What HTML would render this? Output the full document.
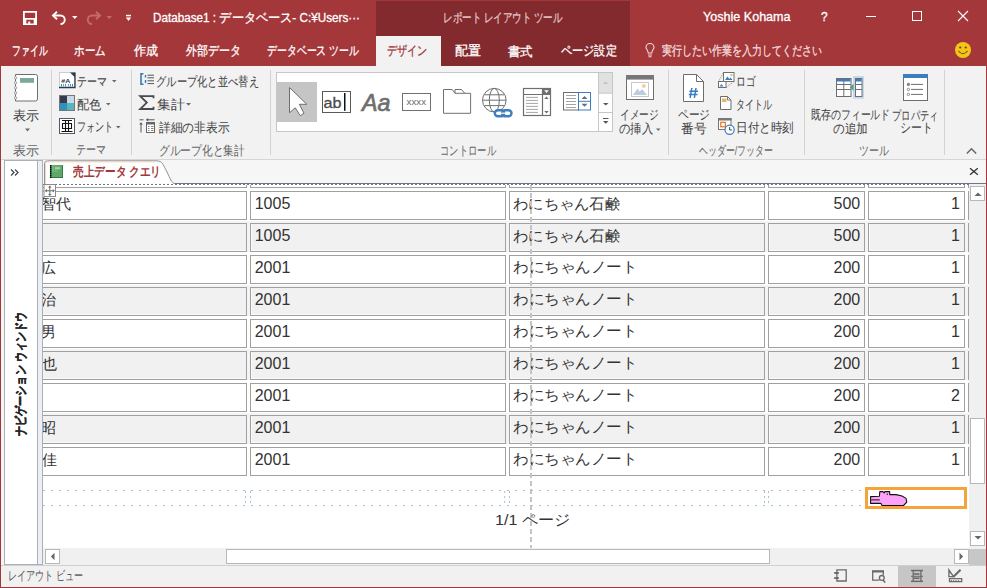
<!DOCTYPE html>
<html><head><meta charset="utf-8">
<style>
*{box-sizing:border-box}
html,body{margin:0;padding:0;width:987px;height:588px;overflow:hidden;background:#A4373A;font-family:"Liberation Sans",sans-serif}
.a{position:absolute;white-space:nowrap}
.r{position:absolute}
svg{position:absolute;overflow:visible}
.box{position:absolute;height:29px;border:1px solid #A0A0A0;background:#fff}
.g{background:#F1F1F1;box-shadow:inset 1px -1px 0 #FBFBFB}
.num{position:absolute;font-size:15px;line-height:15px;color:#3A3A3A;white-space:nowrap}
.jp{position:absolute;font-size:15px;line-height:15px;color:#3A3A3A;white-space:nowrap;transform-origin:0 0}
</style></head><body>
<!-- title bar -->
<div class="r" style="left:376px;top:1px;width:254px;height:65px;background:#832A2E"></div>
<div class="r" style="left:376px;top:36px;width:65px;height:30px;background:#F2F2F2"></div>
<!-- ribbon -->
<div class="r" style="left:1px;top:66px;width:985px;height:93px;background:#F2F2F2"></div>
<div class="r" style="left:1px;top:159px;width:985px;height:1px;background:#D6D6D6"></div>
<div class="r" style="left:51px;top:70px;width:1px;height:85px;background:#D2D2D2"></div>
<div class="r" style="left:131px;top:70px;width:1px;height:85px;background:#D2D2D2"></div>
<div class="r" style="left:270px;top:70px;width:1px;height:85px;background:#D2D2D2"></div>
<div class="r" style="left:668px;top:70px;width:1px;height:85px;background:#D2D2D2"></div>
<div class="r" style="left:804px;top:70px;width:1px;height:85px;background:#D2D2D2"></div>
<div class="r" style="left:944px;top:70px;width:1px;height:85px;background:#D2D2D2"></div>
<!-- main area -->
<div class="r" style="left:1px;top:160px;width:985px;height:405px;background:#F6F6F6"></div>
<!-- nav pane -->
<div class="r" style="left:4px;top:160px;width:39px;height:405px;background:#EDEFF2;border:1px solid #A9B0BA"></div>
<div class="r" style="left:5px;top:161px;width:33px;height:403px;background:#FFFFFF;border-right:1px solid #A9B0BA"></div>
<!-- doc tab bar -->
<div class="r" style="left:43px;top:160px;width:943px;height:24px;background:#F6F6F6"></div>
<div class="r" style="left:174px;top:183px;width:812px;height:1px;background:#6F7783"></div>
<!-- report area -->
<div class="r" style="left:43px;top:184px;width:926px;height:365px;background:#FFFFFF"></div>
<div class="r" style="left:43px;top:184px;width:926px;height:1px;background:repeating-linear-gradient(90deg,#6F7783 0 2px,transparent 2px 4px)"></div>
<!-- grid clip -->
<div class="r" style="left:0;top:0;width:987px;height:588px;clip-path:inset(185px 19px 40px 43px)">
  <div class="r" style="left:43px;top:221px;width:925px;height:31px;background:#F4F4F4"></div>
<div class="r" style="left:43px;top:285px;width:925px;height:31px;background:#F4F4F4"></div>
<div class="r" style="left:43px;top:349px;width:925px;height:31px;background:#F4F4F4"></div>
<div class="r" style="left:43px;top:413px;width:925px;height:31px;background:#F4F4F4"></div>
<div class="box" style="left:40px;top:159px;width:207px"></div>
  <div class="box" style="left:250px;top:159px;width:256px"></div>
  <div class="box" style="left:509px;top:159px;width:256px"></div>
  <div class="box" style="left:768px;top:159px;width:97px"></div>
  <div class="box" style="left:868px;top:159px;width:97px"></div>
  <div class="box" style="left:40px;top:191px;width:207px"></div>
<div class="box" style="left:250px;top:191px;width:256px"></div>
<div class="box" style="left:509px;top:191px;width:256px"></div>
<div class="box" style="left:768px;top:191px;width:97px"></div>
<div class="box" style="left:868px;top:191px;width:97px"></div>
<div class="box g" style="left:40px;top:223px;width:207px"></div>
<div class="box g" style="left:250px;top:223px;width:256px"></div>
<div class="box g" style="left:509px;top:223px;width:256px"></div>
<div class="box g" style="left:768px;top:223px;width:97px"></div>
<div class="box g" style="left:868px;top:223px;width:97px"></div>
<div class="box" style="left:40px;top:255px;width:207px"></div>
<div class="box" style="left:250px;top:255px;width:256px"></div>
<div class="box" style="left:509px;top:255px;width:256px"></div>
<div class="box" style="left:768px;top:255px;width:97px"></div>
<div class="box" style="left:868px;top:255px;width:97px"></div>
<div class="box g" style="left:40px;top:287px;width:207px"></div>
<div class="box g" style="left:250px;top:287px;width:256px"></div>
<div class="box g" style="left:509px;top:287px;width:256px"></div>
<div class="box g" style="left:768px;top:287px;width:97px"></div>
<div class="box g" style="left:868px;top:287px;width:97px"></div>
<div class="box" style="left:40px;top:319px;width:207px"></div>
<div class="box" style="left:250px;top:319px;width:256px"></div>
<div class="box" style="left:509px;top:319px;width:256px"></div>
<div class="box" style="left:768px;top:319px;width:97px"></div>
<div class="box" style="left:868px;top:319px;width:97px"></div>
<div class="box g" style="left:40px;top:351px;width:207px"></div>
<div class="box g" style="left:250px;top:351px;width:256px"></div>
<div class="box g" style="left:509px;top:351px;width:256px"></div>
<div class="box g" style="left:768px;top:351px;width:97px"></div>
<div class="box g" style="left:868px;top:351px;width:97px"></div>
<div class="box" style="left:40px;top:383px;width:207px"></div>
<div class="box" style="left:250px;top:383px;width:256px"></div>
<div class="box" style="left:509px;top:383px;width:256px"></div>
<div class="box" style="left:768px;top:383px;width:97px"></div>
<div class="box" style="left:868px;top:383px;width:97px"></div>
<div class="box g" style="left:40px;top:415px;width:207px"></div>
<div class="box g" style="left:250px;top:415px;width:256px"></div>
<div class="box g" style="left:509px;top:415px;width:256px"></div>
<div class="box g" style="left:768px;top:415px;width:97px"></div>
<div class="box g" style="left:868px;top:415px;width:97px"></div>
<div class="box" style="left:40px;top:447px;width:207px"></div>
<div class="box" style="left:250px;top:447px;width:256px"></div>
<div class="box" style="left:509px;top:447px;width:256px"></div>
<div class="box" style="left:768px;top:447px;width:97px"></div>
<div class="box" style="left:868px;top:447px;width:97px"></div>
  <div class="a" style="left:41.00px;top:195.75px;font-size:15px;line-height:1;color:#333333;font-weight:400;">智代</div>
<div class="a" style="left:254.70px;top:196.10px;font-size:16px;line-height:1;color:#333333;font-weight:400;">1005</div>
<div class="a" style="left:513.18px;top:195.70px;font-size:15px;line-height:1;color:#333333;font-weight:400;transform:scaleX(1.0194);transform-origin:0 0;">わにちゃん石鹸</div>
<div class="a" style="left:833.50px;top:196.10px;font-size:16px;line-height:1;color:#333333;font-weight:400;">500</div>
<div class="a" style="left:951.00px;top:196.10px;font-size:16px;line-height:1;color:#333333;font-weight:400;">1</div>
<div class="a" style="left:254.70px;top:228.10px;font-size:16px;line-height:1;color:#333333;font-weight:400;">1005</div>
<div class="a" style="left:513.18px;top:227.70px;font-size:15px;line-height:1;color:#333333;font-weight:400;transform:scaleX(1.0194);transform-origin:0 0;">わにちゃん石鹸</div>
<div class="a" style="left:833.50px;top:228.10px;font-size:16px;line-height:1;color:#333333;font-weight:400;">500</div>
<div class="a" style="left:951.00px;top:228.10px;font-size:16px;line-height:1;color:#333333;font-weight:400;">1</div>
<div class="a" style="left:41.00px;top:260.25px;font-size:15px;line-height:1;color:#333333;font-weight:400;">広</div>
<div class="a" style="left:254.70px;top:260.10px;font-size:16px;line-height:1;color:#333333;font-weight:400;">2001</div>
<div class="a" style="left:513.16px;top:259.20px;font-size:15px;line-height:1;color:#333333;font-weight:400;transform:scaleX(1.0365);transform-origin:0 0;">わにちゃんノート</div>
<div class="a" style="left:833.50px;top:260.10px;font-size:16px;line-height:1;color:#333333;font-weight:400;">200</div>
<div class="a" style="left:951.00px;top:260.10px;font-size:16px;line-height:1;color:#333333;font-weight:400;">1</div>
<div class="a" style="left:41.00px;top:291.75px;font-size:15px;line-height:1;color:#333333;font-weight:400;">治</div>
<div class="a" style="left:254.70px;top:292.10px;font-size:16px;line-height:1;color:#333333;font-weight:400;">2001</div>
<div class="a" style="left:513.16px;top:291.20px;font-size:15px;line-height:1;color:#333333;font-weight:400;transform:scaleX(1.0365);transform-origin:0 0;">わにちゃんノート</div>
<div class="a" style="left:833.50px;top:292.10px;font-size:16px;line-height:1;color:#333333;font-weight:400;">200</div>
<div class="a" style="left:951.00px;top:292.10px;font-size:16px;line-height:1;color:#333333;font-weight:400;">1</div>
<div class="a" style="left:41.00px;top:323.75px;font-size:15px;line-height:1;color:#333333;font-weight:400;">男</div>
<div class="a" style="left:254.70px;top:324.10px;font-size:16px;line-height:1;color:#333333;font-weight:400;">2001</div>
<div class="a" style="left:513.16px;top:323.20px;font-size:15px;line-height:1;color:#333333;font-weight:400;transform:scaleX(1.0365);transform-origin:0 0;">わにちゃんノート</div>
<div class="a" style="left:833.50px;top:324.10px;font-size:16px;line-height:1;color:#333333;font-weight:400;">200</div>
<div class="a" style="left:951.00px;top:324.10px;font-size:16px;line-height:1;color:#333333;font-weight:400;">1</div>
<div class="a" style="left:42.00px;top:355.75px;font-size:15px;line-height:1;color:#333333;font-weight:400;">也</div>
<div class="a" style="left:254.70px;top:356.10px;font-size:16px;line-height:1;color:#333333;font-weight:400;">2001</div>
<div class="a" style="left:513.16px;top:355.20px;font-size:15px;line-height:1;color:#333333;font-weight:400;transform:scaleX(1.0365);transform-origin:0 0;">わにちゃんノート</div>
<div class="a" style="left:833.50px;top:356.10px;font-size:16px;line-height:1;color:#333333;font-weight:400;">200</div>
<div class="a" style="left:951.00px;top:356.10px;font-size:16px;line-height:1;color:#333333;font-weight:400;">1</div>
<div class="a" style="left:254.70px;top:388.10px;font-size:16px;line-height:1;color:#333333;font-weight:400;">2001</div>
<div class="a" style="left:513.16px;top:387.20px;font-size:15px;line-height:1;color:#333333;font-weight:400;transform:scaleX(1.0365);transform-origin:0 0;">わにちゃんノート</div>
<div class="a" style="left:833.50px;top:388.10px;font-size:16px;line-height:1;color:#333333;font-weight:400;">200</div>
<div class="a" style="left:951.00px;top:388.10px;font-size:16px;line-height:1;color:#333333;font-weight:400;">2</div>
<div class="a" style="left:41.00px;top:419.75px;font-size:15px;line-height:1;color:#333333;font-weight:400;">昭</div>
<div class="a" style="left:254.70px;top:420.10px;font-size:16px;line-height:1;color:#333333;font-weight:400;">2001</div>
<div class="a" style="left:513.16px;top:419.20px;font-size:15px;line-height:1;color:#333333;font-weight:400;transform:scaleX(1.0365);transform-origin:0 0;">わにちゃんノート</div>
<div class="a" style="left:833.50px;top:420.10px;font-size:16px;line-height:1;color:#333333;font-weight:400;">200</div>
<div class="a" style="left:951.00px;top:420.10px;font-size:16px;line-height:1;color:#333333;font-weight:400;">1</div>
<div class="a" style="left:42.00px;top:451.75px;font-size:15px;line-height:1;color:#333333;font-weight:400;">佳</div>
<div class="a" style="left:254.70px;top:452.10px;font-size:16px;line-height:1;color:#333333;font-weight:400;">2001</div>
<div class="a" style="left:513.16px;top:451.20px;font-size:15px;line-height:1;color:#333333;font-weight:400;transform:scaleX(1.0365);transform-origin:0 0;">わにちゃんノート</div>
<div class="a" style="left:833.50px;top:452.10px;font-size:16px;line-height:1;color:#333333;font-weight:400;">200</div>
<div class="a" style="left:951.00px;top:452.10px;font-size:16px;line-height:1;color:#333333;font-weight:400;">1</div>
</div>
<!-- vertical report edge line -->
<div class="r" style="left:968px;top:185px;width:1px;height:3px;background:#A0A0A0"></div>
<div class="r" style="left:968px;top:191px;width:1px;height:29px;background:#A0A0A0"></div>
<div class="r" style="left:968px;top:223px;width:1px;height:29px;background:#A0A0A0"></div>
<div class="r" style="left:968px;top:255px;width:1px;height:29px;background:#A0A0A0"></div>
<div class="r" style="left:968px;top:287px;width:1px;height:29px;background:#A0A0A0"></div>
<div class="r" style="left:968px;top:319px;width:1px;height:29px;background:#A0A0A0"></div>
<div class="r" style="left:968px;top:351px;width:1px;height:29px;background:#A0A0A0"></div>
<div class="r" style="left:968px;top:383px;width:1px;height:29px;background:#A0A0A0"></div>
<div class="r" style="left:968px;top:415px;width:1px;height:29px;background:#A0A0A0"></div>
<div class="r" style="left:968px;top:447px;width:1px;height:29px;background:#A0A0A0"></div>
<!-- dashed center line -->
<div class="r" style="left:530px;top:185px;width:2px;height:363px;background:repeating-linear-gradient(180deg,#C4C4C4 0 5px,transparent 5px 8px)"></div>
<!-- footer dotted lines -->
<div class="r" style="left:43px;top:490px;width:925px;height:1px;background:repeating-linear-gradient(90deg,#A8C0D4 0 2px,transparent 2px 8px)"></div>
<div class="r" style="left:43px;top:505px;width:925px;height:1px;background:repeating-linear-gradient(90deg,#A8C0D4 0 2px,transparent 2px 8px)"></div>
<!-- orange selected box -->
<div class="r" style="left:865px;top:487px;width:102px;height:22px;border:3px solid #F5A33B;background:#fff"></div>
<!-- vertical scrollbar -->
<div class="r" style="left:969px;top:184px;width:17px;height:365px;background:#F0F0F0"></div>
<div class="r" style="left:970px;top:186px;width:15px;height:15px;background:#fff;border:1px solid #B8B8B8"></div>
<div class="r" style="left:970px;top:418px;width:15px;height:66px;background:#fff;border:1px solid #B8B8B8"></div>
<div class="r" style="left:970px;top:531px;width:15px;height:15px;background:#fff;border:1px solid #B8B8B8"></div>
<!-- horizontal scrollbar -->
<div class="r" style="left:43px;top:548px;width:926px;height:17px;background:#F0F0F0"></div>
<div class="r" style="left:45px;top:549px;width:15px;height:15px;background:#fff;border:1px solid #B8B8B8"></div>
<div class="r" style="left:226px;top:549px;width:544px;height:15px;background:#fff;border:1px solid #B8B8B8"></div>
<div class="r" style="left:954px;top:549px;width:15px;height:15px;background:#fff;border:1px solid #B8B8B8"></div>
<div class="r" style="left:969px;top:549px;width:17px;height:16px;background:#C6C7C9"></div>
<!-- status bar -->
<div class="r" style="left:1px;top:565px;width:985px;height:22px;background:#F1F1F1;border-top:1px solid #D0D0D0"></div>
<div class="r" style="left:898px;top:566px;width:38px;height:21px;background:#C6C6C6"></div>
<!--ICONS-->
<!-- save -->
<svg style="left:0;top:0" width="987" height="66">
<g fill="#FFFFFF">
<path d="M23 11h14v14h-14z M24.8 12.8v5.3h10.4v-5.3z M26.3 19.8v3.7h1.9v-2h2v2h3.5v-3.7z" fill-rule="evenodd"/>
</g>
<!-- undo -->
<path d="M54 15.5 H60.5 A4.2 4.2 0 0 1 60.5 24" fill="none" stroke="#FFFFFF" stroke-width="1.9"/>
<path d="M57 11.8 L53 15.5 L57 19.2" fill="none" stroke="#FFFFFF" stroke-width="1.9"/>
<path d="M72 16h5.5l-2.75 3z" fill="#FFFFFF"/>
<!-- redo -->
<path d="M99 15.5 H92 A4.2 4.2 0 0 0 92 24" fill="none" stroke="#C46B6E" stroke-width="1.9"/>
<path d="M96 11.8 L100 15.5 L96 19.2" fill="none" stroke="#C46B6E" stroke-width="1.9"/>
<path d="M106.5 16h5.5l-2.75 3z" fill="#C46B6E"/>
<!-- customize -->
<rect x="126" y="14.8" width="5" height="1.5" fill="#FFFFFF"/>
<path d="M125.8 17.5h5.4l-2.7 3.6z" fill="#FFFFFF"/>
<!-- minimize -->
<rect x="866" y="16" width="10" height="1" fill="#FFFFFF"/>
<!-- maximize -->
<rect x="912.5" y="11.5" width="9" height="9" fill="none" stroke="#FFFFFF" stroke-width="1"/>
<!-- close -->
<path d="M958 11 L968 21 M968 11 L958 21" stroke="#FFFFFF" stroke-width="1.1" fill="none"/>
<!-- lightbulb -->
<path d="M648.2 53 C648.2 50.5 646 49 646 47.5 A4 4 0 0 1 654 47.5 C654 49 651.8 50.5 651.8 53 Z" fill="none" stroke="#F2DCDC" stroke-width="1.1"/>
<path d="M648 55 h4 M648.5 56.8 h3" stroke="#F2DCDC" stroke-width="1.1"/>
<!-- smiley -->
<circle cx="963" cy="50" r="8" fill="#F6C413"/>
<circle cx="960.2" cy="47.5" r="1.1" fill="#4A4A3A"/>
<circle cx="965.8" cy="47.5" r="1.1" fill="#4A4A3A"/>
<path d="M958.5 51 Q963 56.5 967.5 51" fill="none" stroke="#4A4A3A" stroke-width="1.1"/>
</svg>

<svg style="left:0;top:0" width="987" height="160">
<!-- 表示 notebook -->
<path d="M15.5 74.5 H35.5 Q37.5 74.5 37.5 76.5 V99 Q37.5 101 35.5 101 H15.5 Z" fill="#FFFFFF" stroke="#6E6E6E" stroke-width="1"/>
<rect x="20" y="78" width="14" height="4.8" fill="#7BAA98"/>
<g fill="#FFFFFF" stroke="#8A8A8A" stroke-width="0.8">
<circle cx="15.6" cy="77.8" r="1.2"/><circle cx="15.6" cy="82.8" r="1.2"/><circle cx="15.6" cy="87.8" r="1.2"/><circle cx="15.6" cy="92.9" r="1.2"/><circle cx="15.6" cy="97.9" r="1.2"/>
</g>
<path d="M25 128.5 h5 l-2.5 3z" fill="#6A6A6A"/>
<!-- theme icon -->
<rect x="59.5" y="72.5" width="15" height="15" fill="#FFFFFF" stroke="#C8CDD4" stroke-width="1"/>
<path d="M59 87.5 H75 V72.5" fill="none" stroke="#2F3B4C" stroke-width="1.3"/>
<path d="M70 72.5 H75 V77.5 Z" fill="#2F3B4C"/>
<text x="61.3" y="82.6" font-family="'Liberation Sans',sans-serif" font-size="6" font-weight="700" fill="#2F3B4C" textLength="9" lengthAdjust="spacingAndGlyphs">#A</text>
<rect x="61" y="84" width="1" height="2.5" fill="#2E92BA"/><rect x="63" y="84" width="1" height="2.5" fill="#57B5BE"/><rect x="65" y="84" width="1" height="2.5" fill="#2E92BA"/><rect x="68" y="84" width="1" height="2.5" fill="#57B5BE"/><rect x="70" y="84" width="1" height="2.5" fill="#2E92BA"/><rect x="72" y="84" width="1" height="2.5" fill="#2E92BA"/>
<path d="M112 80 h4.5 l-2.25 2.5z" fill="#6A6A6A"/>
<!-- colors icon -->
<rect x="59" y="95" width="16" height="16" fill="#777"/>
<rect x="60" y="96" width="7" height="7" fill="#3A3A4E"/><rect x="67" y="96" width="7" height="7" fill="#C9D8E6"/>
<rect x="60" y="103" width="7" height="7" fill="#2E92BA"/><rect x="67" y="103" width="7" height="7" fill="#57B5BE"/>
<path d="M106 103 h4.5 l-2.25 2.5z" fill="#6A6A6A"/>
<!-- font icon -->
<rect x="59.5" y="118.5" width="15" height="15" fill="#FFFFFF" stroke="#505A6A" stroke-width="1"/>
<path d="M62 120.5 h10 M61.5 131.5 h11 M62.5 123.5 h9 v5 h-9 z M65.5 121 v10 M68.5 121 v10" fill="none" stroke="#111" stroke-width="1.1"/>
<path d="M116 126 h4.5 l-2.25 2.5z" fill="#6A6A6A"/>
<!-- group & sort -->
<path d="M143.5 73.8 H141 V84.2 H143.5" fill="none" stroke="#3A78BC" stroke-width="1.6"/>
<path d="M145.5 75 v2.5 M145.5 80 v3" stroke="#3A78BC" stroke-width="1.4"/>
<path d="M147.5 75.2 h6.5 M147.5 77.8 h6.5 M147.5 80.8 h6.5 M147.5 83.6 h6.5" stroke="#555" stroke-width="1"/>
<!-- sigma -->
<path d="M153.5 98.2 V96.2 H140.2 L146.8 102.6 L140.2 109 H153.5 V106.8" fill="none" stroke="#4A4A4A" stroke-width="1.8"/>
<path d="M186 103 h5 l-2.5 2.7z" fill="#6A6A6A"/>
<!-- details hide -->
<path d="M139.5 119.8 h4 M146.5 119.8 h8 M141 124 v8.5" stroke="#555" stroke-width="1"/>
<path d="M146 119.8 l2.2 -1.8 v3.6z M141 122.2 l-1.8 2.2 h3.6z" fill="#555"/>
<rect x="146.5" y="122.5" width="8" height="10" fill="#FFFFFF" stroke="#666" stroke-width="1"/>
<rect x="146" y="122" width="9" height="2.5" fill="#666"/>
<path d="M148 126.5 h1.5 M151 126.5 h2.5 M148 128.5 h1.5 M151 128.5 h2.5 M148 130.5 h1.5 M151 130.5 h2.5" stroke="#777" stroke-width="0.9"/>
<!-- gallery -->
<rect x="276.5" y="72.5" width="336" height="59" fill="#FFFFFF" stroke="#C6C6C6" stroke-width="1"/>
<rect x="277" y="82" width="40" height="40" fill="#C5C5C5"/>
<path d="M289.5 87.5 L306.8 104.3 L299.3 104.3 L304 113.2 L300.3 115.7 L295.2 107.8 L289.5 112.8 Z" fill="#FFFFFF" stroke="#6E6E6E" stroke-width="1" stroke-linejoin="round"/>
<rect x="322.5" y="91.5" width="28" height="21" fill="#FFFFFF" stroke="#5A5A5A" stroke-width="1"/>
<text x="323.6" y="108.2" font-family="'Liberation Sans',sans-serif" font-size="15.5" font-weight="400" fill="#4A4A4A" stroke="#4A4A4A" stroke-width="0.3" textLength="18"  lengthAdjust="spacingAndGlyphs">ab</text>
<rect x="344" y="93" width="1.5" height="17.8" fill="#111"/>
<text x="362" y="110.7" font-family="'Liberation Sans',sans-serif" font-size="24" font-style="italic" font-weight="400" fill="#6E6E6E" stroke="#6E6E6E" stroke-width="0.7" textLength="28.5" lengthAdjust="spacingAndGlyphs">Aa</text>
<rect x="402.5" y="93.5" width="28" height="17" fill="#FFFFFF" stroke="#707070" stroke-width="1"/>
<text x="406.5" y="105" font-family="'Liberation Sans',sans-serif" font-size="9" fill="#6A6A6A" textLength="19.5" lengthAdjust="spacingAndGlyphs">xxxx</text>
<!-- folder -->
<path d="M443.5 113.3 V89.5 H452.2 L455 93.3 H470.6 V113.3 Z" fill="#FFFFFF" stroke="#707070" stroke-width="1"/>
<path d="M455 93.3 V89.5 H461.5 L464.7 93.3" fill="none" stroke="#707070" stroke-width="1"/>
<!-- globe -->
<g fill="none" stroke="#707070" stroke-width="1">
<circle cx="494.3" cy="100.2" r="11.8"/>
<ellipse cx="494.3" cy="100.2" rx="5" ry="11.8"/>
<path d="M482.5 100.2 h23.6 M484.3 94.8 h20 M484.3 105.6 h20"/>
</g>
<path d="M494 109.5 h19 v8.5 h-19z" fill="#FFFFFF" opacity="0.9"/>
<g fill="none" stroke="#3F7DBF" stroke-width="2.4">
<rect x="494.8" y="110.2" width="9.5" height="6" rx="3"/>
<rect x="502" y="110.2" width="9.5" height="6" rx="3"/>
</g>
<path d="M500 113.2 h6" stroke="#FFFFFF" stroke-width="1.2"/>
<!-- combo list -->
<rect x="523.5" y="88.5" width="27" height="27" fill="#FFFFFF" stroke="#6E6E6E" stroke-width="1.2"/>
<path d="M523.5 94.5 H550.5 M542.5 88.5 V115.5" stroke="#6E6E6E" stroke-width="1.2"/>
<rect x="542.5" y="88.5" width="8" height="6" fill="#6E6E6E"/>
<path d="M544.2 90.2 h4.6 l-2.3 2.8z" fill="#FFFFFF"/>
<path d="M544.3 99 h4.4 l-2.2 -2.4z M544.3 111 h4.4 l-2.2 2.4z" fill="#6E6E6E"/>
<path d="M526 97.4 h12 M526 100.4 h12 M526 103.4 h12 M526 106.4 h12 M526 109.4 h12 M526 112.4 h12" stroke="#9A9A9A" stroke-width="0.9"/>
<!-- spin list -->
<rect x="563.5" y="92.5" width="15" height="17.5" fill="#FFFFFF" stroke="#6E6E6E" stroke-width="1"/>
<path d="M566 95.5 h10 M566 98.5 h10 M566 101.5 h10 M566 104.5 h10 M566 107.5 h10" stroke="#9A9A9A" stroke-width="0.9"/>
<rect x="578.5" y="92.5" width="12" height="17.5" fill="#FFFFFF" stroke="#3C7CC0" stroke-width="1"/>
<path d="M578.5 101.3 h12" stroke="#3C7CC0" stroke-width="1"/>
<path d="M581.5 99 h6 l-3 -3z M581.5 103.8 h6 l-3 3z" fill="#6E6E6E"/>
<!-- gallery scroll buttons -->
<rect x="598.5" y="72.5" width="14" height="59" fill="#FFFFFF" stroke="#C6C6C6" stroke-width="1"/>
<rect x="599" y="73" width="13" height="20" fill="#E1E1E1"/>
<path d="M598.5 93.2 h14 M598.5 112.5 h14" stroke="#C6C6C6" stroke-width="1"/>
<path d="M603 84 h5 l-2.5 -2.5z" fill="#C0C0C0"/>
<path d="M603 103 h5.5 l-2.75 2.6z" fill="#555"/>
<path d="M603 118.5 h5.5" stroke="#555" stroke-width="1"/>
<path d="M603 121 h5.5 l-2.75 2.8z" fill="#555"/>
<!-- image insert -->
<rect x="626.5" y="75.5" width="27" height="24" fill="#FFFFFF" stroke="#6E6E6E" stroke-width="1"/>
<rect x="626" y="75" width="28" height="4.6" fill="#777"/>
<rect x="631.5" y="82.5" width="17" height="14" fill="#FFFFFF" stroke="#C8C8C8" stroke-width="1"/>
<path d="M633 95 L637.5 88.5 L642 95 Z" fill="#B8CEE0"/>
<path d="M639.5 92 L642 89 L647 95 H642 Z" fill="#B8CEE0"/>
<circle cx="643.9" cy="86" r="2" fill="#F2D29B"/>
<path d="M656 128.5 h4.5 l-2.25 2.5z" fill="#6A6A6A"/>
<!-- page number -->
<path d="M683.5 74.5 H696.5 L703.5 81.5 V101.5 H683.5 Z" fill="#FFFFFF" stroke="#6E6E6E" stroke-width="1"/>
<path d="M696.5 74.5 V81.5 H703.5" fill="none" stroke="#6E6E6E" stroke-width="1"/>
<path d="M691.8 88 L690.2 97.8 M696 88 L694.4 97.8 M689.3 91.3 H698 M688.8 94.6 H697.5" stroke="#3C7CC0" stroke-width="1.5" fill="none"/>
<!-- logo -->
<rect x="723.5" y="72.5" width="10.5" height="9" fill="#FFFFFF" stroke="#707070" stroke-width="1"/>
<path d="M725 80 L727.5 76.5 L730 80 Z M728.5 80 L730.5 77.5 L732.5 80z" fill="#3C7CC0"/>
<rect x="730.5" y="74" width="2" height="2" fill="#F0B860"/>
<rect x="718.5" y="81.5" width="7.5" height="6" fill="#FFFFFF" stroke="#707070" stroke-width="1"/>
<path d="M719.5 86.5 L721.5 84 L723.5 86.5z" fill="#3C7CC0"/>
<path d="M718.5 81.5 L723.5 72.5 M726 87.5 L734 81.5" stroke="#707070" stroke-width="0.9" stroke-dasharray="1 1.2"/>
<!-- title -->
<path d="M720.5 96.5 H727.5 L731 100 V109.5 H720.5 Z" fill="#FFFFFF" stroke="#6E6E6E" stroke-width="1"/>
<path d="M727.5 96.5 V100 H731" fill="none" stroke="#6E6E6E" stroke-width="0.9"/>
<rect x="722" y="98.5" width="4.5" height="3.5" fill="#E8B86A"/>
<!-- date time -->
<rect x="718.5" y="118.5" width="12.5" height="11" fill="#FFFFFF" stroke="#777" stroke-width="1"/>
<rect x="718" y="118" width="13.5" height="2.5" fill="#777"/>
<rect x="720.8" y="122.3" width="4.5" height="4.5" fill="#FFFFFF" stroke="#E8711E" stroke-width="1.2"/>
<circle cx="729.6" cy="129.8" r="4.6" fill="#FFFFFF" stroke="#3C7CC0" stroke-width="1.2"/>
<path d="M729.6 127 v3 h2.3" fill="none" stroke="#333" stroke-width="0.9"/>
<!-- add existing fields -->
<rect x="853" y="76" width="11" height="22.7" fill="#C5D9EE"/>
<rect x="836.5" y="78.5" width="14.5" height="18" fill="#FFFFFF" stroke="#6E6E6E" stroke-width="1"/>
<rect x="837" y="79" width="13.5" height="2.5" fill="#3C7CC0"/>
<path d="M843.8 78.5 v18 M836.5 84.5 h14.5 M836.5 89.5 h14.5" stroke="#6E6E6E" stroke-width="1"/>
<rect x="855.5" y="78.5" width="6.5" height="18" fill="#FFFFFF" stroke="#6E6E6E" stroke-width="1"/>
<rect x="856" y="79" width="5.5" height="2.5" fill="#3C7CC0"/>
<path d="M855.5 84.5 h6.5 M855.5 89.5 h6.5" stroke="#6E6E6E" stroke-width="1"/>
<path d="M853.6 83.8 V90.7 L849.7 87.2 Z" fill="#5A9E82"/>
<!-- property sheet -->
<rect x="903.5" y="74.5" width="24" height="26" fill="#FFFFFF" stroke="#6E6E6E" stroke-width="1"/>
<rect x="903" y="74" width="25" height="4" fill="#3C7CC0"/>
<circle cx="908.4" cy="84.4" r="1.2" fill="#777" stroke="#777" stroke-width="0.8"/>
<circle cx="908.4" cy="89.4" r="1.2" fill="#FFF" stroke="#777" stroke-width="0.8"/>
<circle cx="908.4" cy="94.4" r="1.2" fill="#FFF" stroke="#777" stroke-width="0.8"/>
<path d="M911 84.4 h12 M911 89.4 h12 M911 94.4 h12" stroke="#6E6E6E" stroke-width="1"/>
<!-- collapse caret -->
<path d="M966.8 153.5 L971.5 148.8 L976.2 153.5" fill="none" stroke="#666" stroke-width="1.5"/>
</svg>

<svg style="left:0;top:0" width="987" height="588">
<!-- doc tab -->
<path d="M44.5 184 V163.5 Q44.5 160.8 47.5 160.8 H156 C163 160.8 163 165 167 172 C170 178 171.5 183.5 175 183.5" fill="#FFFFFF" stroke="#8C929A" stroke-width="1"/>
<path d="M45.6 184 V163.8 Q45.6 161.9 47.8 161.9 H155" fill="none" stroke="#EFD2B0" stroke-width="0.9"/>
<!-- tab icon (green book) -->
<rect x="50" y="165" width="13" height="13" fill="#2F6B3A"/>
<rect x="51.5" y="165" width="10.8" height="12.2" fill="#5FA86A"/>
<rect x="52" y="165.5" width="6" height="6" fill="#78BC82" opacity="0.8"/>
<rect x="54.3" y="166.8" width="6.5" height="3" fill="#A3D4A9" stroke="#4E9A5B" stroke-width="0.6"/>
<path d="M50.6 165 v13" stroke="#000" stroke-width="1.3" stroke-dasharray="1.2 0.8"/>
<!-- doc close X -->
<path d="M970 168.3 L977.8 174.8 M977.8 168.3 L970 174.8" stroke="#333" stroke-width="1.3"/>
<!-- nav >> -->
<path d="M11 169.5 L14 172.5 L11 175.5 M15 169.5 L18 172.5 L15 175.5" fill="none" stroke="#444C58" stroke-width="1.3"/>
<!-- layout selector -->
<rect x="44" y="184.5" width="11.5" height="12" fill="#FFFFFF" stroke="#8A8A8A" stroke-width="1"/>
<path d="M49.8 186.5 v8.5 M45.5 190.8 h8.6" stroke="#6A6A6A" stroke-width="1"/>
<path d="M49.8 185.6 l-1.8 2 h3.6z M49.8 195.9 l-1.8 -2 h3.6z M44.8 190.8 l2 -1.8 v3.6z M54.8 190.8 l-2 -1.8 v3.6z" fill="#6A6A6A"/>
<!-- header row boxes bottom -->
<!-- footer small marks -->
<path d="M245.5 491 v14 M250.5 491 v14 M504.7 491 v14 M509.5 491 v14 M764.5 491 v14 M768.5 491 v14" stroke="#A8C0D4" stroke-width="1" stroke-dasharray="2 3"/>
<!-- crocodile -->
<path d="M870.6 496.6 L879.4 496.2 L879.8 491.6 L883 491.6 L884.2 493 L884.8 491.6 L889.6 491.6 L889.8 494.6 L896 494.6 L902 496 L906 498.4 L906.8 502.2 L903.5 505.5 L882 505.5 L881 503.4 L870.6 503.4 Z" fill="#FCA3F9" stroke="#111" stroke-width="1.1" stroke-linejoin="round"/>
<path d="M871.2 499.9 H879.8" stroke="#111" stroke-width="1"/>
<circle cx="887.3" cy="494.2" r="0.7" fill="#111"/>
<!-- v-scroll arrows -->
<path d="M974.5 196 h7 l-3.5 -3.6z" fill="#666"/>
<path d="M974.5 536 h7 l-3.5 3.6z" fill="#666"/>
<!-- h-scroll arrows -->
<path d="M54.5 552.8 v7.4 l-3.6 -3.7z" fill="#666"/>
<path d="M959.5 552.8 v7.4 l3.6 -3.7z" fill="#666"/>
<!-- status icons -->
<g fill="none" stroke="#6A6A6A" stroke-width="1.3">
<path d="M836.9 569.9 H846.2 V581 H836.9 Z"/>
<path d="M872.7 571 V580.2 H879.5 M883.3 571 V575"/>
<circle cx="881.8" cy="577.9" r="2.4"/>
<path d="M913.2 570.5 V581.2 M920.9 570.5 V581.2"/>
<path d="M948.9 576.6 V569.8 L953.5 576.6 Z M949.2 572.5 h1.6"/>
<path d="M949.5 578.6 h12.2 v3 h-12.2 z"/>
</g>
<g fill="#6A6A6A">
<rect x="834.2" y="572" width="4.6" height="1.9"/><rect x="834.2" y="577.1" width="4.6" height="1.9"/>
<rect x="872" y="570.2" width="12" height="2.3"/>
<path d="M883.5 579.6 L885.8 581.9 L884.7 583 L882.4 580.7 Z"/>
<rect x="911" y="569.8" width="12" height="1.5"/><rect x="911" y="580.6" width="12" height="1.5"/>
<rect x="914" y="573.2" width="5.5" height="1.6"/><rect x="914" y="577.4" width="5.5" height="1.6"/>
<rect x="911" y="575.8" width="12" height="1"/>
<path d="M953.2 575.5 L959.8 568.9 L961.3 570.4 L954.7 577 L952.8 577.4 Z"/>
<rect x="951" y="580" width="0.9" height="1"/><rect x="953.3" y="580" width="0.9" height="1"/><rect x="955.6" y="580" width="0.9" height="1"/><rect x="957.9" y="580" width="0.9" height="1"/>
</g>
</svg>
<!-- nav vertical text -->
<div class="a" style="left:21px;top:373.8px;font-size:12.5px;line-height:1;color:#262626;font-weight:700;-webkit-text-stroke:0.35px #262626;transform:translate(-50%,-50%) rotate(-90deg) scaleX(0.783)">ナビゲーション ウィンドウ</div>

<div class="a" style="left:152.56px;top:11.75px;font-size:12.5px;line-height:1;color:#FFFFFF;font-weight:400;transform:scaleX(0.9361);transform-origin:0 0;-webkit-text-stroke:0.30px #FFFFFF;">Database1 : データベース- C:¥Users···</div>
<div class="a" style="left:442.53px;top:11.75px;font-size:12.5px;line-height:1;color:#E2C3C4;font-weight:400;transform:scaleX(0.7329);transform-origin:0 0;-webkit-text-stroke:0.30px #E2C3C4;">レポート レイアウト ツール</div>
<div class="a" style="left:703.03px;top:9.75px;font-size:13px;line-height:1;color:#FFFFFF;font-weight:400;transform:scaleX(0.9667);transform-origin:0 0;-webkit-text-stroke:0.30px #FFFFFF;">Yoshie Kohama</div>
<div class="a" style="left:821.08px;top:10.00px;font-size:13px;line-height:1;color:#FFFFFF;font-weight:400;transform:scaleX(0.9167);transform-origin:0 0;-webkit-text-stroke:0.30px #FFFFFF;">?</div>
<div class="a" style="left:11.64px;top:44.75px;font-size:12.5px;line-height:1;color:#FFFFFF;font-weight:400;transform:scaleX(0.6800);transform-origin:0 0;-webkit-text-stroke:0.30px #FFFFFF;">ファイル</div>
<div class="a" style="left:74.19px;top:44.75px;font-size:12.5px;line-height:1;color:#FFFFFF;font-weight:400;transform:scaleX(0.8108);transform-origin:0 0;-webkit-text-stroke:0.30px #FFFFFF;">ホーム</div>
<div class="a" style="left:134.00px;top:45.00px;font-size:12.5px;line-height:1;color:#FFFFFF;font-weight:400;transform:scaleX(0.9231);transform-origin:0 0;-webkit-text-stroke:0.30px #FFFFFF;">作成</div>
<div class="a" style="left:186.15px;top:45.00px;font-size:12.5px;line-height:1;color:#FFFFFF;font-weight:400;transform:scaleX(0.8468);transform-origin:0 0;-webkit-text-stroke:0.30px #FFFFFF;">外部データ</div>
<div class="a" style="left:266.74px;top:44.50px;font-size:12.5px;line-height:1;color:#FFFFFF;font-weight:400;transform:scaleX(0.7605);transform-origin:0 0;-webkit-text-stroke:0.30px #FFFFFF;">データベース ツール</div>
<div class="a" style="left:387.22px;top:44.50px;font-size:12.5px;line-height:1;color:#A4373A;font-weight:400;transform:scaleX(0.7800);transform-origin:0 0;-webkit-text-stroke:0.30px #A4373A;">デザイン</div>
<div class="a" style="left:455.00px;top:45.25px;font-size:12.5px;line-height:1;color:#FFFFFF;font-weight:400;-webkit-text-stroke:0.30px #FFFFFF;">配置</div>
<div class="a" style="left:508.04px;top:45.75px;font-size:12.5px;line-height:1;color:#FFFFFF;font-weight:400;transform:scaleX(0.9600);transform-origin:0 0;-webkit-text-stroke:0.30px #FFFFFF;">書式</div>
<div class="a" style="left:560.64px;top:45.25px;font-size:12.5px;line-height:1;color:#FFFFFF;font-weight:400;transform:scaleX(0.8571);transform-origin:0 0;-webkit-text-stroke:0.30px #FFFFFF;">ページ設定</div>
<div class="a" style="left:662.00px;top:45.25px;font-size:12.5px;line-height:1;color:#F2DCDC;font-weight:400;transform:scaleX(0.7705);transform-origin:0 0;-webkit-text-stroke:0.30px #F2DCDC;">実行したい作業を入力してください</div>
<div class="a" style="left:13.00px;top:109.50px;font-size:12.5px;line-height:1;color:#444444;font-weight:400;-webkit-text-stroke:0.05px #444444;">表示</div>
<div class="a" style="left:13.00px;top:144.50px;font-size:12.5px;line-height:1;color:#666666;font-weight:400;-webkit-text-stroke:0.05px #666666;">表示</div>
<div class="a" style="left:77.23px;top:75.75px;font-size:12.5px;line-height:1;color:#444444;font-weight:400;transform:scaleX(0.7703);transform-origin:0 0;-webkit-text-stroke:0.05px #444444;">テーマ</div>
<div class="a" style="left:77.06px;top:98.50px;font-size:12.5px;line-height:1;color:#444444;font-weight:400;transform:scaleX(0.9400);transform-origin:0 0;-webkit-text-stroke:0.05px #444444;">配色</div>
<div class="a" style="left:76.60px;top:121.00px;font-size:12.5px;line-height:1;color:#444444;font-weight:400;transform:scaleX(0.7021);transform-origin:0 0;-webkit-text-stroke:0.05px #444444;">フォント</div>
<div class="a" style="left:76.23px;top:144.25px;font-size:12.5px;line-height:1;color:#666666;font-weight:400;transform:scaleX(0.7703);transform-origin:0 0;-webkit-text-stroke:0.05px #666666;">テーマ</div>
<div class="a" style="left:156.42px;top:76.00px;font-size:12.5px;line-height:1;color:#444444;font-weight:400;transform:scaleX(0.7913);transform-origin:0 0;-webkit-text-stroke:0.05px #444444;">グループ化と並べ替え</div>
<div class="a" style="left:157.43px;top:99.00px;font-size:12.5px;line-height:1;color:#444444;font-weight:400;transform:scaleX(1.0682);transform-origin:0 0;-webkit-text-stroke:0.05px #444444;">集計</div>
<div class="a" style="left:158.50px;top:121.75px;font-size:12.5px;line-height:1;color:#444444;font-weight:400;transform:scaleX(0.9026);transform-origin:0 0;-webkit-text-stroke:0.05px #444444;">詳細の非表示</div>
<div class="a" style="left:158.85px;top:144.75px;font-size:12.5px;line-height:1;color:#666666;font-weight:400;transform:scaleX(0.8232);transform-origin:0 0;-webkit-text-stroke:0.05px #666666;">グループ化と集計</div>
<div class="a" style="left:440.07px;top:144.75px;font-size:12.5px;line-height:1;color:#666666;font-weight:400;transform:scaleX(0.7171);transform-origin:0 0;-webkit-text-stroke:0.05px #666666;">コントロール</div>
<div class="a" style="left:620.26px;top:109.00px;font-size:12.5px;line-height:1;color:#444444;font-weight:400;transform:scaleX(0.7400);transform-origin:0 0;-webkit-text-stroke:0.05px #444444;">イメージ</div>
<div class="a" style="left:618.50px;top:123.00px;font-size:12.5px;line-height:1;color:#444444;font-weight:400;transform:scaleX(0.8684);transform-origin:0 0;-webkit-text-stroke:0.05px #444444;">の挿入</div>
<div class="a" style="left:678.18px;top:109.00px;font-size:12.5px;line-height:1;color:#444444;font-weight:400;transform:scaleX(0.8243);transform-origin:0 0;-webkit-text-stroke:0.05px #444444;">ページ</div>
<div class="a" style="left:681.02px;top:123.00px;font-size:12.5px;line-height:1;color:#444444;font-weight:400;transform:scaleX(0.9792);transform-origin:0 0;-webkit-text-stroke:0.05px #444444;">番号</div>
<div class="a" style="left:736.00px;top:76.25px;font-size:12.5px;line-height:1;color:#444444;font-weight:400;transform:scaleX(0.7500);transform-origin:0 0;-webkit-text-stroke:0.05px #444444;">ロゴ</div>
<div class="a" style="left:736.12px;top:98.50px;font-size:12.5px;line-height:1;color:#444444;font-weight:400;transform:scaleX(0.6900);transform-origin:0 0;-webkit-text-stroke:0.05px #444444;">タイトル</div>
<div class="a" style="left:735.73px;top:121.75px;font-size:12.5px;line-height:1;color:#444444;font-weight:400;transform:scaleX(0.8871);transform-origin:0 0;-webkit-text-stroke:0.05px #444444;">日付と時刻</div>
<div class="a" style="left:699.00px;top:145.00px;font-size:12.5px;line-height:1;color:#666666;font-weight:400;transform:scaleX(0.6887);transform-origin:0 0;-webkit-text-stroke:0.05px #666666;">ヘッダー/フッター</div>
<div class="a" style="left:810.74px;top:108.50px;font-size:12.5px;line-height:1;color:#444444;font-weight:400;transform:scaleX(0.7624);transform-origin:0 0;-webkit-text-stroke:0.05px #444444;">既存のフィールド</div>
<div class="a" style="left:832.50px;top:123.25px;font-size:12.5px;line-height:1;color:#444444;font-weight:400;transform:scaleX(0.8947);transform-origin:0 0;-webkit-text-stroke:0.05px #444444;">の追加</div>
<div class="a" style="left:892.29px;top:109.50px;font-size:12.5px;line-height:1;color:#444444;font-weight:400;transform:scaleX(0.7131);transform-origin:0 0;-webkit-text-stroke:0.05px #444444;">プロパティ</div>
<div class="a" style="left:899.82px;top:122.25px;font-size:12.5px;line-height:1;color:#444444;font-weight:400;transform:scaleX(0.8382);transform-origin:0 0;-webkit-text-stroke:0.05px #444444;">シート</div>
<div class="a" style="left:859.24px;top:144.75px;font-size:12.5px;line-height:1;color:#666666;font-weight:400;transform:scaleX(0.7632);transform-origin:0 0;-webkit-text-stroke:0.05px #666666;">ツール</div>
<div class="a" style="left:73.00px;top:164.75px;font-size:13px;line-height:1;color:#A4373A;font-weight:700;transform:scaleX(0.8190);transform-origin:0 0;">売上データ クエリ</div>
<div class="a" style="left:7.60px;top:569.75px;font-size:12.5px;line-height:1;color:#595959;font-weight:400;transform:scaleX(0.7019);transform-origin:0 0;">レイアウト ビュー</div>
<div class="a" style="left:495.43px;top:512.00px;font-size:15px;line-height:1;color:#333333;font-weight:400;transform:scaleX(1.0735);transform-origin:0 0;">1/1 ページ</div>

</body></html>
